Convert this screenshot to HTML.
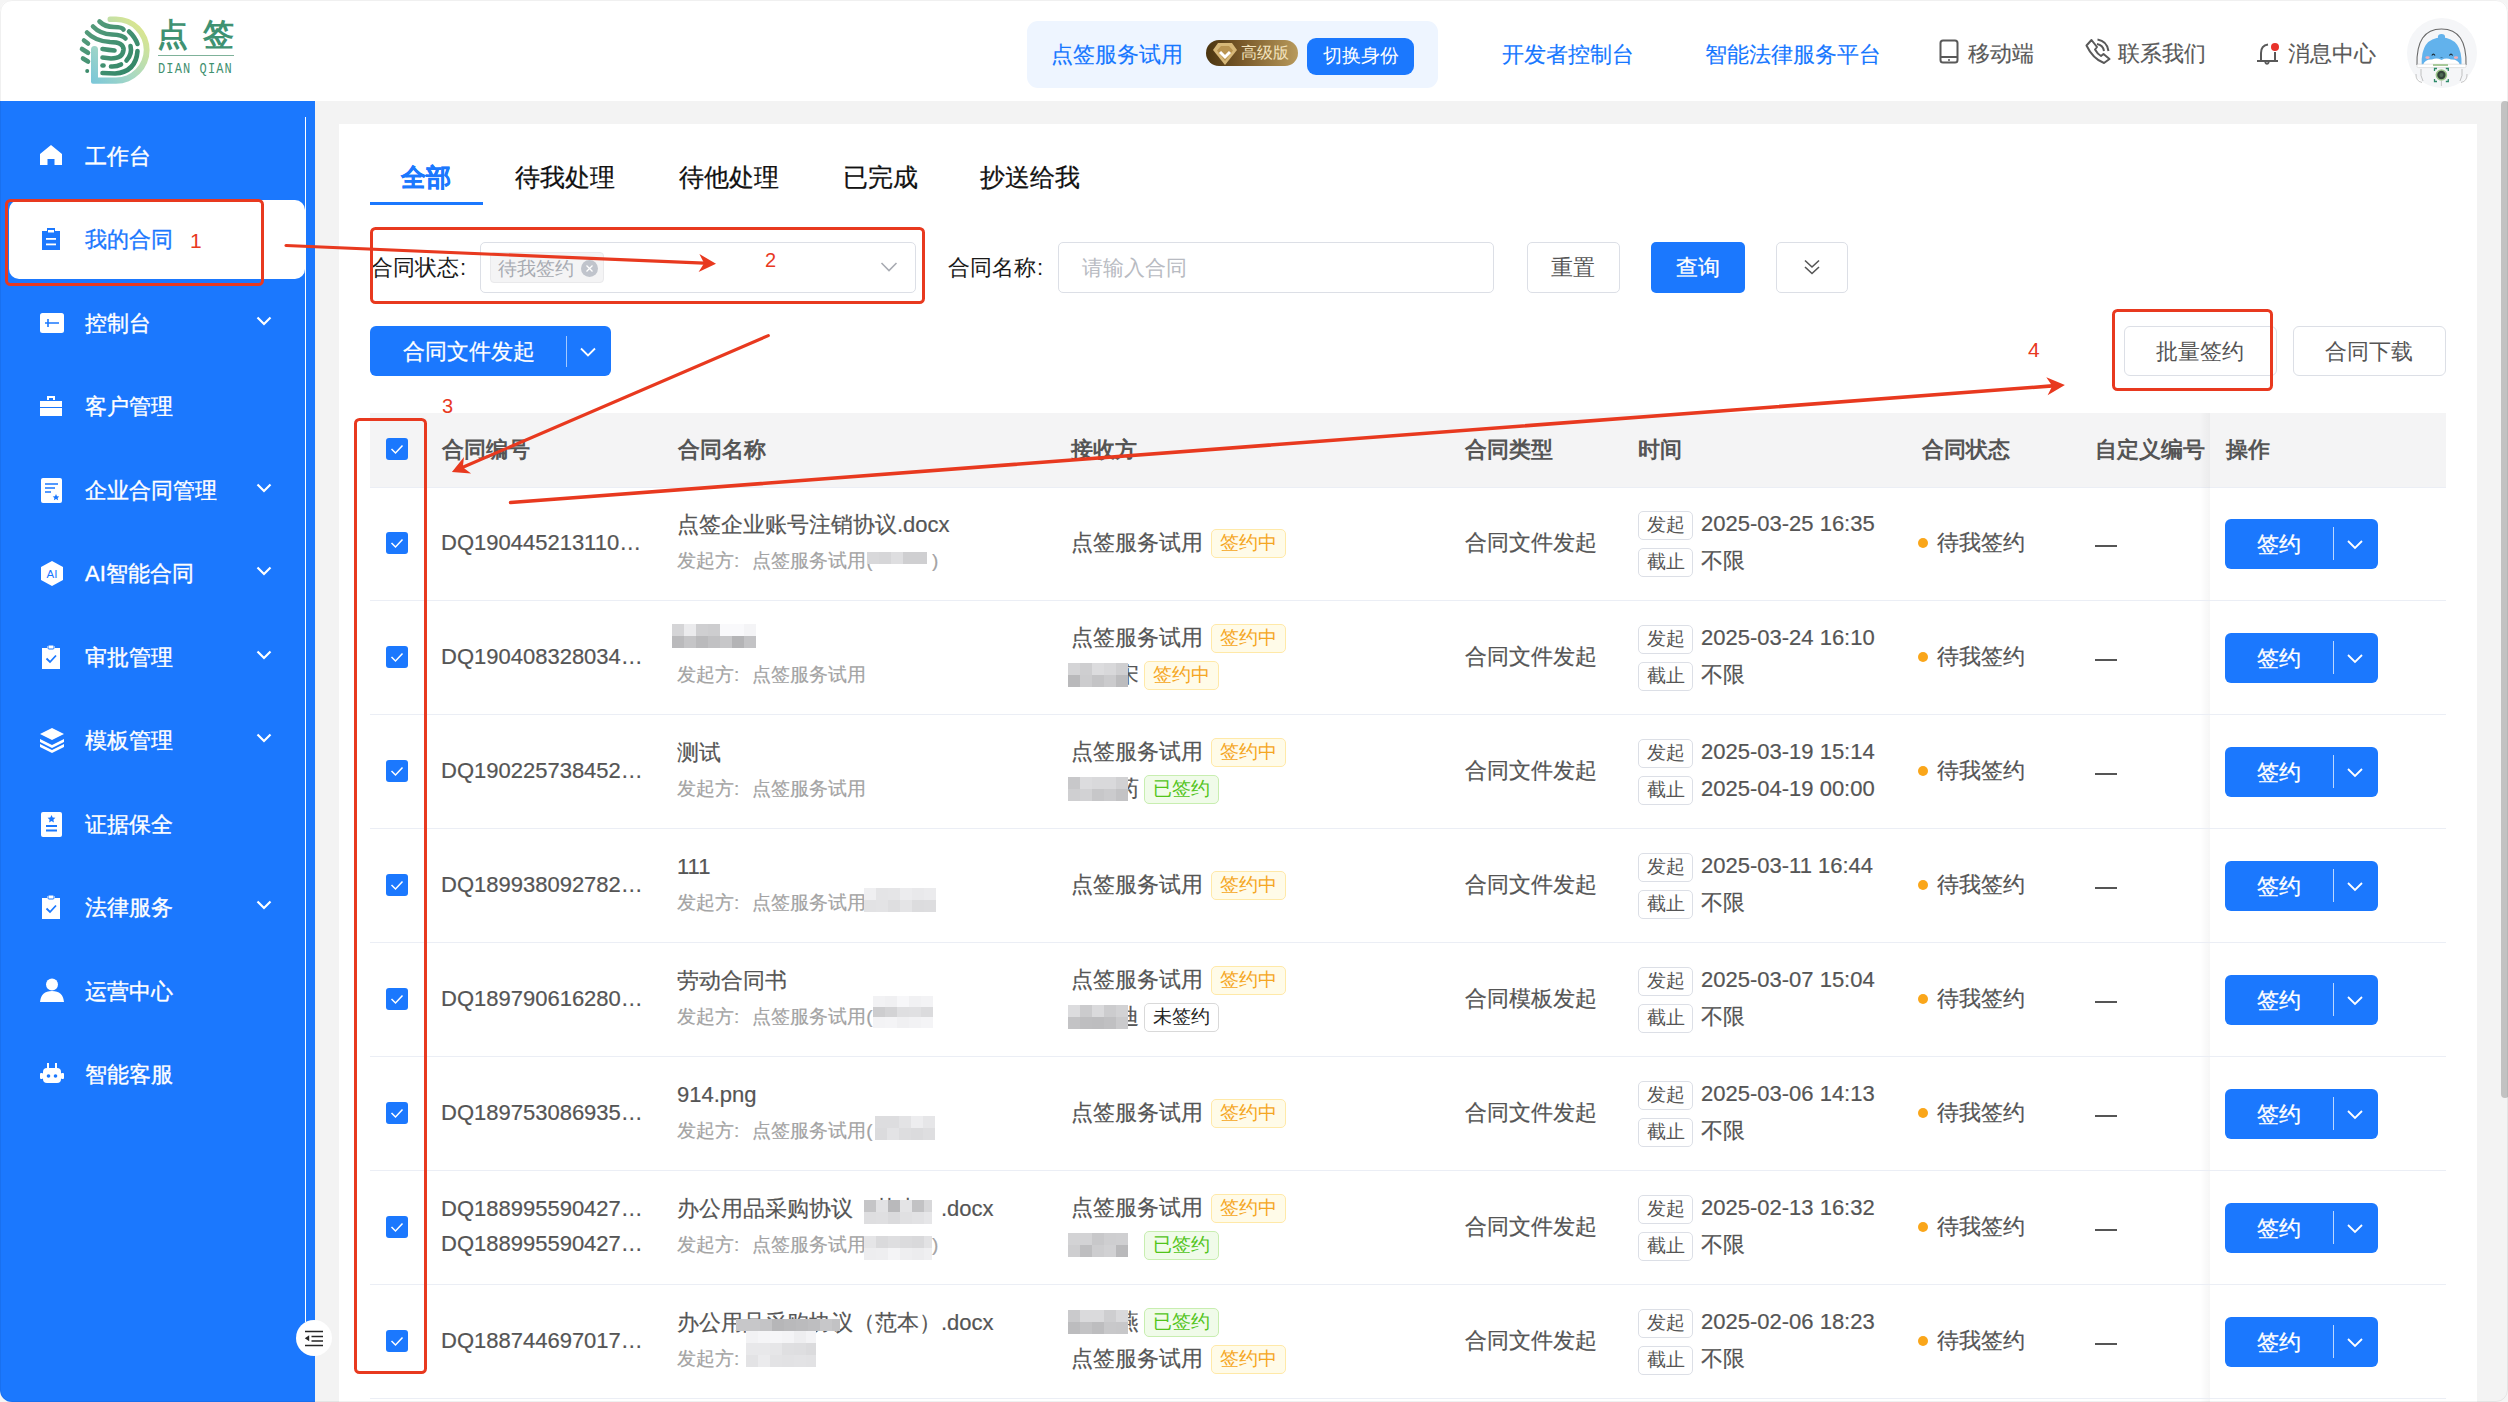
<!DOCTYPE html>
<html><head><meta charset="utf-8">
<style>
*{box-sizing:border-box;margin:0;padding:0}
html,body{width:2508px;height:1402px;overflow:hidden;background:#f5f5f5}
body{position:relative;font-family:"Liberation Sans",sans-serif;color:#555}
.a{position:absolute}
.nw{white-space:nowrap}
#hdr{left:0;top:0;width:2508px;height:101px;background:#fff}
#side{left:0;top:101px;width:315px;height:1301px;background:#1b78fe}
#card{left:339px;top:124px;width:2138px;height:1290px;background:#fff}
.hl{font-size:22px;line-height:22px;color:#1677ff;-webkit-text-stroke:0.15px currentColor}
.hg{font-size:22px;line-height:22px;color:#595959;-webkit-text-stroke:0.15px currentColor}
.mi{left:85px;font-size:22px;line-height:22px;color:#fff;font-weight:400;margin-top:1px;-webkit-text-stroke:0.35px currentColor}
.ts{-webkit-text-stroke:0.2px currentColor}
.ic{left:40px}
.chev{left:257px}
</style></head><body>
<div id="win" class="a" style="left:0;top:0;width:2508px;height:1402px;border-radius:12px;overflow:hidden;background:#f3f3f3">
<!-- HEADER -->
<div id="hdr" class="a">
  <!-- logo -->
  <svg class="a" style="left:60px;top:0px" width="200" height="100" viewBox="0 0 200 100">
    <defs><linearGradient id="lg" x1="31" y1="84" x2="90" y2="30" gradientUnits="userSpaceOnUse"><stop offset="0" stop-color="#78c6da"/><stop offset="0.45" stop-color="#a9d9c2"/><stop offset="1" stop-color="#dfe78a"/></linearGradient>
    <linearGradient id="lg2" x1="20" y1="20" x2="80" y2="75" gradientUnits="userSpaceOnUse"><stop offset="0" stop-color="#5a9e7e"/><stop offset="1" stop-color="#2f8566"/></linearGradient></defs>
    <path d="M31 49.5 Q31 46 34.5 46 Q38 46 38 49.5 L38 77.5 L56 77.5 A27.5 27.5 0 0 0 56 22 L50 22 Q47.5 22 47.5 19.2 Q47.5 16.5 50 16.5 L56 16.5 A33.5 33.5 0 0 1 56 83.7 L33 83.7 Q31 83.7 31 81.7 Z" fill="url(#lg)"/>
    <g fill="none" stroke="url(#lg2)" stroke-width="4.6" stroke-linecap="round">
      <path d="M39.5 21.5 Q45 27 54 27 Q62 27 63.5 29.5"/>
      <path d="M33 26.5 Q40 34 52 34.5 Q63 35 65.5 38.5"/>
      <path d="M27 32.5 Q35 41 50 42 Q64 42 63.5 50 Q62.5 58.5 51 58.5 L42.5 57.5"/>
      <path d="M42.5 49 Q49 50 54.5 50.5"/>
      <path d="M69 31.5 Q75 37 77.5 44"/>
      <path d="M70.5 46 Q72.5 54 66.5 60.5"/>
      <path d="M77.5 51 Q76 72 55 73.5 L42.5 73"/>
      <path d="M42.5 65.5 L43.5 65.5"/>
      <path d="M51 66.5 Q57 66.8 61 64.5"/>
      <path d="M24 40.5 L28 43.5"/>
      <path d="M22 49 L28 52.8"/>
      <path d="M23 58.5 L28 61.5"/>
    </g>
    <circle cx="27.2" cy="71" r="2" fill="#3d8c6c"/>
  </svg>
  <div class="a nw" style="left:157px;top:17px;font-size:31px;line-height:36px;font-weight:900;color:#3f9272;letter-spacing:15px">点签</div>
  <div class="a" style="left:158px;top:55px;width:76px;height:1px;background:#7fb29a"></div>
  <div class="a nw" style="left:158px;top:62px;font-size:15px;line-height:16px;color:#3f9070;letter-spacing:1.4px;font-family:'Liberation Mono',monospace;transform:scaleX(0.8);transform-origin:0 0">DIAN QIAN</div>

  <div class="a" style="left:1027px;top:21px;width:411px;height:67px;background:#eef5ff;border-radius:11px"></div>
  <div class="a nw hl" style="left:1051px;top:44px">点签服务试用</div>
  <div class="a" style="left:1206px;top:40px;width:92px;height:26px;border-radius:13px;background:linear-gradient(90deg,#4b3510 0%,#7a5a2a 40%,#b89a5c 100%)"></div>
  <svg class="a" style="left:1212px;top:42px" width="26" height="24" viewBox="0 0 26 24"><path d="M6 1 L20 1 L25 8 L13 23 L1 8Z" fill="#d7b878"/><path d="M9 4 L17 4 L21 8.5 L13 19 L5 8.5Z" fill="#b99451"/><path d="M8 10 L13 15 L18 10" fill="none" stroke="#fff" stroke-width="3"/></svg>
  <div class="a nw" style="left:1241px;top:44px;font-size:16px;line-height:18px;color:#f3e3bd">高级版</div>
  <div class="a" style="left:1307px;top:38px;width:107px;height:37px;background:#1b78fe;border-radius:9px"></div>
  <div class="a nw" style="left:1323px;top:45px;font-size:19px;line-height:22px;color:#fff">切换身份</div>

  <div class="a nw hl" style="left:1502px;top:44px">开发者控制台</div>
  <div class="a nw hl" style="left:1705px;top:44px">智能法律服务平台</div>

  <svg class="a" style="left:1939px;top:39px" width="20" height="26" viewBox="0 0 20 26"><rect x="1.5" y="1.5" width="17" height="22" rx="2.5" fill="none" stroke="#595959" stroke-width="2"/><path d="M2 18H18" stroke="#595959" stroke-width="2"/><circle cx="10" cy="21" r="1" fill="#595959"/></svg>
  <div class="a nw hg" style="left:1968px;top:43px">移动端</div>
  <svg class="a" style="left:2084px;top:37px" width="28" height="28" viewBox="0 0 28 28"><path d="M2.5 8.5 L7.5 3 L13 10 L11 12.5 Q13.5 17 17 19 L19.5 17 L25.5 22 L20 26 Q9 22 2.5 8.5Z" fill="none" stroke="#595959" stroke-width="2" stroke-linejoin="round"/><path d="M13.5 2.5 Q23 4 24.5 14" fill="none" stroke="#595959" stroke-width="2"/><path d="M13 7 Q19 8 20 14" fill="none" stroke="#595959" stroke-width="2"/></svg>
  <div class="a nw hg" style="left:2118px;top:43px">联系我们</div>
  <svg class="a" style="left:2256px;top:42px" width="26" height="24" viewBox="0 0 26 24"><path d="M5 18 L5 11 Q5 3.5 12 2.5" fill="none" stroke="#595959" stroke-width="2"/><path d="M19 10 L19 18" fill="none" stroke="#595959" stroke-width="2"/><path d="M1 19H22" stroke="#595959" stroke-width="2"/><path d="M9 20 Q11 23.5 13 20" fill="none" stroke="#595959" stroke-width="1.8"/><circle cx="19" cy="5" r="4" fill="#e8322b"/></svg>
  <div class="a nw hg" style="left:2288px;top:43px">消息中心</div>
  <!-- avatar -->
  <div class="a" style="left:2407px;top:18px;width:70px;height:70px;border-radius:50%;background:#f5f6f8"></div>
  <svg class="a" style="left:2407px;top:18px" width="70" height="70" viewBox="0 0 70 70">
    <path d="M10 47 Q9 11 34.5 11 Q60 11 59 47" fill="none" stroke="#6a6a6a" stroke-width="1.1"/>
    <path d="M14.7 47 Q13.5 20 34.5 19.5 Q55.5 20 54.5 47Z" fill="#62b2ec"/>
    <ellipse cx="34.5" cy="19" rx="3.6" ry="3" fill="#62b2ec"/>
    <path d="M16 47 Q18 41 25 41.5 Q30 39.5 34.5 42 Q39 39.5 44 41.5 Q51 41 53 47Z" fill="#fff"/>
    <path d="M24.8 37.5 Q26.4 34.8 28 37.5 M42.4 37.5 Q44 34.8 45.6 37.5" fill="none" stroke="#1d2a33" stroke-width="1.1"/>
    <path d="M33.5 39.5h2" stroke="#2b5a7a" stroke-width="0.6"/>
    <ellipse cx="20.5" cy="39.6" rx="2.2" ry="1.3" fill="#f4aeb6"/><ellipse cx="49" cy="39.6" rx="2.2" ry="1.3" fill="#f4aeb6"/>
    <rect x="10" y="46.2" width="49" height="3.4" rx="1.2" fill="#fff" stroke="#c9c9c9" stroke-width="0.5"/>
    <rect x="26" y="46" width="15" height="2" fill="#a8c99a"/>
    <path d="M9 56 Q8.5 63 15 64.5 M60 56 Q60.5 63 54 64.5 M14 51 Q13 58 16 63 M55 51 Q56 58 53 63" fill="none" stroke="#aaa" stroke-width="0.7"/>
    <circle cx="34.4" cy="57" r="5.8" fill="#9cc58a"/><circle cx="34.4" cy="57" r="4.2" fill="#34433a"/><circle cx="34.4" cy="57" r="2" fill="#4f6a55"/>
    <path d="M27.5 53v-2.5h2.5 M41.3 53v-2.5h-2.5 M27.5 61v2.5h2.5 M41.3 61v2.5h-2.5" fill="none" stroke="#2e8a6a" stroke-width="1.3"/>
    <path d="M34.4 63v5" stroke="#bbb" stroke-width="0.8"/>
  </svg>
  
</div>

<!-- SIDEBAR -->
<div id="side" class="a">
</div>
<div class="a" style="left:305px;top:117px;width:1px;height:1205px;background:#fff"></div>
<div class="a" style="left:9px;top:200px;width:296px;height:79px;background:#fff;border-radius:10px"></div>
<svg class="a" style="left:40px;top:144px" width="24" height="25" viewBox="0 0 24 25"><path d="M11 1 L22 10 L22 21 L14.5 21 L14.5 15 L7.5 15 L7.5 21 L0 21 L0 10Z" fill="#fff"/></svg>
<div class="a nw mi" style="top:145px;color:#fff">工作台</div>
<svg class="a" style="left:40px;top:227px" width="24" height="25" viewBox="0 0 24 25"><path d="M7 1h8v3h5v19H2V4h5Z" fill="#1b78fe"/><rect x="6" y="11" width="10" height="1.8" fill="#fff"/><rect x="6" y="16.5" width="10" height="1.8" fill="#fff"/><rect x="8" y="3" width="6" height="2.5" fill="#fff"/></svg>
<div class="a nw mi" style="top:228px;color:#1b78fe">我的合同</div>
<svg class="a" style="left:40px;top:311px" width="24" height="25" viewBox="0 0 24 25"><rect x="0" y="2" width="24" height="20" rx="2.5" fill="#fff"/><path d="M5 12H19 M8 8V16" stroke="#1b78fe" stroke-width="1.6"/></svg>
<div class="a nw mi" style="top:312px;color:#fff">控制台</div>
<svg class="a" style="left:256px;top:316px" width="16" height="10" viewBox="0 0 16 10"><path d="M1.5 1.5L8 8l6.5-6.5" fill="none" stroke="#fff" stroke-width="2.2"/></svg>
<svg class="a" style="left:40px;top:394px" width="24" height="25" viewBox="0 0 24 25"><path d="M7 2h8v4h-2V4H9v2H7Z M0 7h22v6H0Z M0 14h22v8H0Z" fill="#fff"/></svg>
<div class="a nw mi" style="top:395px;color:#fff">客户管理</div>
<svg class="a" style="left:40px;top:478px" width="24" height="25" viewBox="0 0 24 25"><rect x="1" y="0" width="21" height="25" rx="2" fill="#fff"/><path d="M5 6h13 M5 10h10 M5 14h6" stroke="#1b78fe" stroke-width="1.6"/><path d="M16 16l1 2.2 2.3.3-1.7 1.5.5 2.3-2.1-1.2-2.1 1.2.5-2.3-1.7-1.5 2.3-.3Z" fill="#1b78fe"/></svg>
<div class="a nw mi" style="top:479px;color:#fff">企业合同管理</div>
<svg class="a" style="left:256px;top:483px" width="16" height="10" viewBox="0 0 16 10"><path d="M1.5 1.5L8 8l6.5-6.5" fill="none" stroke="#fff" stroke-width="2.2"/></svg>
<svg class="a" style="left:40px;top:561px" width="24" height="25" viewBox="0 0 24 25"><path d="M12 0 L23 6 L23 19 L12 25 L1 19 L1 6Z" fill="#fff"/><text x="12" y="17" font-size="11.5" text-anchor="middle" fill="#1b78fe" font-family="Liberation Sans">AI</text></svg>
<div class="a nw mi" style="top:562px;color:#fff">AI智能合同</div>
<svg class="a" style="left:256px;top:566px" width="16" height="10" viewBox="0 0 16 10"><path d="M1.5 1.5L8 8l6.5-6.5" fill="none" stroke="#fff" stroke-width="2.2"/></svg>
<svg class="a" style="left:40px;top:645px" width="24" height="25" viewBox="0 0 24 25"><path d="M7 1h8v2h5v21H2V3h5Z" fill="#fff"/><rect x="8" y="0" width="6" height="4" rx="1" fill="#fff" stroke="#1b78fe" stroke-width="1"/><path d="M6.5 13.5l3.5 3.5 6-6.5" fill="none" stroke="#1b78fe" stroke-width="1.8"/></svg>
<div class="a nw mi" style="top:646px;color:#fff">审批管理</div>
<svg class="a" style="left:256px;top:650px" width="16" height="10" viewBox="0 0 16 10"><path d="M1.5 1.5L8 8l6.5-6.5" fill="none" stroke="#fff" stroke-width="2.2"/></svg>
<svg class="a" style="left:40px;top:728px" width="24" height="25" viewBox="0 0 24 25"><path d="M12 0L24 6L12 12L0 6Z" fill="#fff"/><path d="M0 11l12 6 12-6v3l-12 6-12-6Z" fill="#fff"/><path d="M0 16l12 6 12-6v3l-12 6-12-6Z" fill="#fff"/></svg>
<div class="a nw mi" style="top:729px;color:#fff">模板管理</div>
<svg class="a" style="left:256px;top:733px" width="16" height="10" viewBox="0 0 16 10"><path d="M1.5 1.5L8 8l6.5-6.5" fill="none" stroke="#fff" stroke-width="2.2"/></svg>
<svg class="a" style="left:40px;top:812px" width="24" height="25" viewBox="0 0 24 25"><rect x="1" y="0" width="21" height="25" rx="2" fill="#fff"/><path d="M11.5 3l1.2 2.5 2.7.3-2 1.9.5 2.7-2.4-1.3-2.4 1.3.5-2.7-2-1.9 2.7-.3Z" fill="#1b78fe"/><path d="M6 14h11 M6 18.5h11" stroke="#1b78fe" stroke-width="1.8"/></svg>
<div class="a nw mi" style="top:813px;color:#fff">证据保全</div>
<svg class="a" style="left:40px;top:895px" width="24" height="25" viewBox="0 0 24 25"><path d="M7 1h8v2h5v21H2V3h5Z" fill="#fff"/><rect x="8" y="0" width="6" height="4" rx="1" fill="#fff" stroke="#1b78fe" stroke-width="1"/><path d="M6.5 13.5l3.5 3.5 6-6.5" fill="none" stroke="#1b78fe" stroke-width="1.8"/></svg>
<div class="a nw mi" style="top:896px;color:#fff">法律服务</div>
<svg class="a" style="left:256px;top:900px" width="16" height="10" viewBox="0 0 16 10"><path d="M1.5 1.5L8 8l6.5-6.5" fill="none" stroke="#fff" stroke-width="2.2"/></svg>
<svg class="a" style="left:40px;top:978px" width="24" height="25" viewBox="0 0 24 25"><circle cx="12" cy="6.5" r="6" fill="#fff"/><path d="M0 24Q1 13 12 13Q23 13 24 24Z" fill="#fff"/></svg>
<div class="a nw mi" style="top:980px;color:#fff">运营中心</div>
<svg class="a" style="left:40px;top:1062px" width="24" height="25" viewBox="0 0 24 25"><rect x="3" y="6" width="18" height="15" rx="4" fill="#fff"/><rect x="0" y="11" width="3" height="6" rx="1" fill="#fff"/><rect x="21" y="11" width="3" height="6" rx="1" fill="#fff"/><path d="M8 1v5 M16 1v5" stroke="#fff" stroke-width="2"/><circle cx="8.5" cy="14" r="1.8" fill="#1b78fe"/><circle cx="15.5" cy="14" r="1.8" fill="#1b78fe"/></svg>
<div class="a nw mi" style="top:1063px;color:#fff">智能客服</div>
<div class="a" style="left:296px;top:1320px;width:36px;height:36px;border-radius:50%;background:#fff"></div>
<svg class="a" style="left:304px;top:1329px" width="20" height="18" viewBox="0 0 20 18"><path d="M1 2.5H19 M7.5 7.5H19 M7.5 12H19 M1 16.5H19" stroke="#262626" stroke-width="1.5"/><path d="M5.2 6.3V12.2L0.8 9.2Z" fill="#262626"/></svg>


<!-- SCROLLBAR -->
<div class="a" style="left:2501px;top:101px;width:8px;height:997px;background:#c2c2c2;border-radius:4px"></div>



</div>

<!-- CARD -->
<div id="card" class="a"></div>
<div class="a nw" style="left:401px;top:163px;font-size:25px;line-height:28px;color:#1b78fe;font-weight:700;-webkit-text-stroke:0.4px #1b78fe">全部</div>
<div class="a nw" style="left:515px;top:163px;font-size:25px;line-height:28px;color:#111;-webkit-text-stroke:0.25px #111">待我处理</div>
<div class="a nw" style="left:679px;top:163px;font-size:25px;line-height:28px;color:#111;-webkit-text-stroke:0.25px #111">待他处理</div>
<div class="a nw" style="left:843px;top:163px;font-size:25px;line-height:28px;color:#111;-webkit-text-stroke:0.25px #111">已完成</div>
<div class="a nw" style="left:980px;top:163px;font-size:25px;line-height:28px;color:#111;-webkit-text-stroke:0.25px #111">抄送给我</div>
<div class="a" style="left:370px;top:202px;width:113px;height:3px;background:#1b78fe"></div>
<div class="a nw" style="left:371px;top:256px;font-size:22px;line-height:24px;color:#1a1a1a">合同状态<span style="margin-left:1px">:</span></div>
<div class="a" style="left:480px;top:242px;width:436px;height:51px;border:1px solid #dcdfe6;border-radius:5px;background:#fff"></div>
<div class="a" style="left:490px;top:252px;width:114px;height:31px;border:1px solid #e9e9eb;border-radius:4px;background:#f4f4f5"></div>
<div class="a nw" style="left:498px;top:258px;font-size:18.5px;line-height:22px;color:#a8abb2">待我签约</div>
<div class="a" style="left:581px;top:260px;width:17px;height:17px;border-radius:50%;background:#c0c4cc"></div>
<svg class="a" style="left:581px;top:260px" width="17" height="17" viewBox="0 0 17 17"><path d="M5.5 5.5l6 6M11.5 5.5l-6 6" stroke="#fff" stroke-width="1.3"/></svg>
<svg class="a" style="left:880px;top:261px" width="18" height="12" viewBox="0 0 18 12"><path d="M1.5 2L9 9.5 16.5 2" fill="none" stroke="#a8abb2" stroke-width="1.6"/></svg>
<div class="a nw" style="left:948px;top:256px;font-size:22px;line-height:24px;color:#1a1a1a">合同名称<span style="margin-left:1px">:</span></div>
<div class="a" style="left:1058px;top:242px;width:436px;height:51px;border:1px solid #dcdfe6;border-radius:5px;background:#fff"></div>
<div class="a nw" style="left:1082px;top:256px;font-size:21px;line-height:24px;color:#b8bbc2">请输入合同</div>
<div class="a" style="left:1527px;top:242px;width:93px;height:51px;border:1px solid #dcdfe6;border-radius:5px;background:#fff"></div>
<div class="a nw" style="left:1551px;top:256px;font-size:22px;line-height:24px;color:#555">重置</div>
<div class="a" style="left:1651px;top:242px;width:94px;height:51px;border-radius:5px;background:#1b78fe"></div>
<div class="a nw" style="left:1676px;top:256px;font-size:22px;line-height:24px;color:#fff;-webkit-text-stroke:0.3px #fff">查询</div>
<div class="a" style="left:1776px;top:242px;width:72px;height:51px;border:1px solid #dcdfe6;border-radius:5px;background:#fff"></div>
<svg class="a" style="left:1801px;top:258px" width="22" height="18" viewBox="0 0 22 18"><path d="M4 2.5l7 6.5 7-6.5M4 9l7 6.5 7-6.5" fill="none" stroke="#555" stroke-width="1.6"/></svg>
<div class="a" style="left:370px;top:326px;width:241px;height:50px;border-radius:6px;background:#1b78fe"></div>
<div class="a nw" style="left:403px;top:340px;font-size:22px;line-height:24px;color:#fff;-webkit-text-stroke:0.25px #fff">合同文件发起</div>
<div class="a" style="left:566px;top:336px;width:1px;height:31px;background:rgba(255,255,255,.6)"></div>
<svg class="a" style="left:579px;top:346px" width="18" height="12" viewBox="0 0 18 12"><path d="M2 2.5L9 9.5 16 2.5" fill="none" stroke="#fff" stroke-width="1.8"/></svg>
<div class="a" style="left:2124px;top:326px;width:153px;height:50px;border:1px solid #dcdfe6;border-radius:6px;background:#fff"></div>
<div class="a nw" style="left:2156px;top:340px;font-size:22px;line-height:24px;color:#555">批量签约</div>
<div class="a" style="left:2293px;top:326px;width:153px;height:50px;border:1px solid #dcdfe6;border-radius:6px;background:#fff"></div>
<div class="a nw" style="left:2325px;top:340px;font-size:22px;line-height:24px;color:#555">合同下载</div>
<div class="a" style="left:370px;top:413px;width:2076px;height:75px;background:#f4f4f5;border-bottom:1px solid #ebeef5"></div>
<div class="a" style="left:386px;top:438px;width:22px;height:22px;border-radius:3px;background:#1b78fe"></div><svg class="a" style="left:386px;top:438px" width="22" height="22" viewBox="0 0 22 22"><path d="M5.5 11l4 4 7-7.5" fill="none" stroke="#fff" stroke-width="1.5"/></svg>
<div class="a nw" style="left:442px;top:438px;font-size:22px;line-height:24px;color:#555;font-weight:700">合同编号</div>
<div class="a nw" style="left:678px;top:438px;font-size:22px;line-height:24px;color:#555;font-weight:700">合同名称</div>
<div class="a nw" style="left:1071px;top:438px;font-size:22px;line-height:24px;color:#555;font-weight:700">接收方</div>
<div class="a nw" style="left:1465px;top:438px;font-size:22px;line-height:24px;color:#555;font-weight:700">合同类型</div>
<div class="a nw" style="left:1638px;top:438px;font-size:22px;line-height:24px;color:#555;font-weight:700">时间</div>
<div class="a nw" style="left:1922px;top:438px;font-size:22px;line-height:24px;color:#555;font-weight:700">合同状态</div>
<div class="a nw" style="left:2095px;top:438px;font-size:22px;line-height:24px;color:#555;font-weight:700">自定义编号</div>
<div class="a nw" style="left:2226px;top:438px;font-size:22px;line-height:24px;color:#555;font-weight:700">操作</div>
<div class="a" style="left:2200px;top:413px;width:10px;height:989px;background:linear-gradient(90deg,rgba(0,0,0,0),rgba(0,0,0,.035))"></div>
<div class="a" style="left:370px;top:600px;width:2076px;height:1px;background:#ebeef5"></div>
<div class="a" style="left:386px;top:532px;width:22px;height:22px;border-radius:3px;background:#1b78fe"></div><svg class="a" style="left:386px;top:532px" width="22" height="22" viewBox="0 0 22 22"><path d="M5.5 11l4 4 7-7.5" fill="none" stroke="#fff" stroke-width="1.5"/></svg>
<div class="a nw ts" style="left:441px;top:531px;font-size:22px;line-height:24px;color:#555;">DQ190445213110…</div>
<div class="a nw ts" style="left:677px;top:513px;font-size:22px;line-height:24px;color:#555;">点签企业账号注销协议.docx</div>
<div class="a nw ts" style="left:677px;top:549px;font-size:19px;line-height:24px;color:#a3a3a3;">发起方<span style='margin-right:13px'>:</span>点签服务试用(</div>
<div class="a" style="left:867px;top:552px;width:12px;height:12px;background:rgb(216,216,218)"></div><div class="a" style="left:879px;top:552px;width:12px;height:12px;background:rgb(214,214,216)"></div><div class="a" style="left:891px;top:552px;width:12px;height:12px;background:rgb(222,222,224)"></div><div class="a" style="left:903px;top:552px;width:12px;height:12px;background:rgb(207,207,209)"></div><div class="a" style="left:915px;top:552px;width:12px;height:12px;background:rgb(207,207,209)"></div>
<div class="a nw ts" style="left:1071px;top:531px;font-size:22px;line-height:24px;color:#555;">点签服务试用</div>
<div class="a" style="left:1211px;top:529px;width:75px;height:29px;border:1px solid #ffe9a8;border-radius:5px;background:#fffbe8"></div><div class="a nw" style="left:1220px;top:532px;font-size:19px;line-height:22px;color:#f5a623">签约中</div>
<div class="a nw ts" style="left:932px;top:549px;font-size:19px;line-height:24px;color:#a3a3a3;">)</div>
<div class="a nw ts" style="left:1465px;top:531px;font-size:22px;line-height:24px;color:#555;">合同文件发起</div>
<div class="a" style="left:1638px;top:511px;width:55px;height:29px;border:1px solid #dcdfe6;border-radius:5px;background:#fff"></div><div class="a nw" style="left:1647px;top:514px;font-size:19px;line-height:22px;color:#555">发起</div>
<div class="a nw ts" style="left:1701px;top:512px;font-size:22px;line-height:24px;color:#555;">2025-03-25 16:35</div>
<div class="a" style="left:1638px;top:548px;width:55px;height:29px;border:1px solid #dcdfe6;border-radius:5px;background:#fff"></div><div class="a nw" style="left:1647px;top:551px;font-size:19px;line-height:22px;color:#555">截止</div>
<div class="a nw ts" style="left:1701px;top:549px;font-size:22px;line-height:24px;color:#555;">不限</div>
<div class="a" style="left:1918px;top:538px;width:10px;height:10px;border-radius:50%;background:#faa61a"></div>
<div class="a nw ts" style="left:1937px;top:531px;font-size:22px;line-height:24px;color:#555;">待我签约</div>
<div class="a" style="left:2095px;top:545px;width:22px;height:1.5px;background:#555"></div>
<div class="a" style="left:2225px;top:519px;width:153px;height:50px;border-radius:6px;background:#1b78fe"></div>
<div class="a nw" style="left:2257px;top:533px;font-size:22px;line-height:24px;color:#fff;-webkit-text-stroke:0.3px #fff">签约</div>
<div class="a" style="left:2333px;top:527px;width:1px;height:33px;background:rgba(255,255,255,.7)"></div>
<svg class="a" style="left:2346px;top:539px" width="18" height="12" viewBox="0 0 18 12"><path d="M2 2L9 9 16 2" fill="none" stroke="#fff" stroke-width="1.8"/></svg>
<div class="a" style="left:370px;top:714px;width:2076px;height:1px;background:#ebeef5"></div>
<div class="a" style="left:386px;top:646px;width:22px;height:22px;border-radius:3px;background:#1b78fe"></div><svg class="a" style="left:386px;top:646px" width="22" height="22" viewBox="0 0 22 22"><path d="M5.5 11l4 4 7-7.5" fill="none" stroke="#fff" stroke-width="1.5"/></svg>
<div class="a nw ts" style="left:441px;top:645px;font-size:22px;line-height:24px;color:#555;">DQ190408328034…</div>
<div class="a" style="left:672px;top:624px;width:12px;height:12px;background:rgb(213,213,215)"></div><div class="a" style="left:684px;top:624px;width:12px;height:12px;background:rgb(235,235,237)"></div><div class="a" style="left:696px;top:624px;width:12px;height:12px;background:rgb(207,207,209)"></div><div class="a" style="left:708px;top:624px;width:12px;height:12px;background:rgb(205,205,207)"></div><div class="a" style="left:720px;top:624px;width:12px;height:12px;background:rgb(249,249,251)"></div><div class="a" style="left:732px;top:624px;width:12px;height:12px;background:rgb(249,249,251)"></div><div class="a" style="left:744px;top:624px;width:12px;height:12px;background:rgb(244,244,246)"></div><div class="a" style="left:672px;top:636px;width:12px;height:12px;background:rgb(186,186,188)"></div><div class="a" style="left:684px;top:636px;width:12px;height:12px;background:rgb(197,197,199)"></div><div class="a" style="left:696px;top:636px;width:12px;height:12px;background:rgb(186,186,188)"></div><div class="a" style="left:708px;top:636px;width:12px;height:12px;background:rgb(193,193,195)"></div><div class="a" style="left:720px;top:636px;width:12px;height:12px;background:rgb(199,199,201)"></div><div class="a" style="left:732px;top:636px;width:12px;height:12px;background:rgb(180,180,182)"></div><div class="a" style="left:744px;top:636px;width:12px;height:12px;background:rgb(195,195,197)"></div>
<div class="a nw ts" style="left:677px;top:663px;font-size:19px;line-height:24px;color:#a3a3a3;">发起方<span style='margin-right:13px'>:</span>点签服务试用</div>
<div class="a nw ts" style="left:1071px;top:626px;font-size:22px;line-height:24px;color:#555;">点签服务试用</div>
<div class="a" style="left:1211px;top:624px;width:75px;height:29px;border:1px solid #ffe9a8;border-radius:5px;background:#fffbe8"></div><div class="a nw" style="left:1220px;top:627px;font-size:19px;line-height:22px;color:#f5a623">签约中</div>
<div class="a nw ts" style="left:1117px;top:663px;font-size:22px;line-height:24px;color:#555;">宋</div>
<div class="a" style="left:1068px;top:663px;width:12px;height:12px;background:rgb(212,212,214)"></div><div class="a" style="left:1080px;top:663px;width:12px;height:12px;background:rgb(206,206,208)"></div><div class="a" style="left:1092px;top:663px;width:12px;height:12px;background:rgb(220,220,222)"></div><div class="a" style="left:1104px;top:663px;width:12px;height:12px;background:rgb(216,216,218)"></div><div class="a" style="left:1116px;top:663px;width:12px;height:12px;background:rgb(207,207,209)"></div><div class="a" style="left:1068px;top:675px;width:12px;height:12px;background:rgb(185,185,187)"></div><div class="a" style="left:1080px;top:675px;width:12px;height:12px;background:rgb(204,204,206)"></div><div class="a" style="left:1092px;top:675px;width:12px;height:12px;background:rgb(196,196,198)"></div><div class="a" style="left:1104px;top:675px;width:12px;height:12px;background:rgb(203,203,205)"></div><div class="a" style="left:1116px;top:675px;width:12px;height:12px;background:rgb(188,188,190)"></div>
<div class="a" style="left:1144px;top:661px;width:75px;height:29px;border:1px solid #ffe9a8;border-radius:5px;background:#fffbe8"></div><div class="a nw" style="left:1153px;top:664px;font-size:19px;line-height:22px;color:#f5a623">签约中</div>
<div class="a nw ts" style="left:1465px;top:645px;font-size:22px;line-height:24px;color:#555;">合同文件发起</div>
<div class="a" style="left:1638px;top:625px;width:55px;height:29px;border:1px solid #dcdfe6;border-radius:5px;background:#fff"></div><div class="a nw" style="left:1647px;top:628px;font-size:19px;line-height:22px;color:#555">发起</div>
<div class="a nw ts" style="left:1701px;top:626px;font-size:22px;line-height:24px;color:#555;">2025-03-24 16:10</div>
<div class="a" style="left:1638px;top:662px;width:55px;height:29px;border:1px solid #dcdfe6;border-radius:5px;background:#fff"></div><div class="a nw" style="left:1647px;top:665px;font-size:19px;line-height:22px;color:#555">截止</div>
<div class="a nw ts" style="left:1701px;top:663px;font-size:22px;line-height:24px;color:#555;">不限</div>
<div class="a" style="left:1918px;top:652px;width:10px;height:10px;border-radius:50%;background:#faa61a"></div>
<div class="a nw ts" style="left:1937px;top:645px;font-size:22px;line-height:24px;color:#555;">待我签约</div>
<div class="a" style="left:2095px;top:659px;width:22px;height:1.5px;background:#555"></div>
<div class="a" style="left:2225px;top:633px;width:153px;height:50px;border-radius:6px;background:#1b78fe"></div>
<div class="a nw" style="left:2257px;top:647px;font-size:22px;line-height:24px;color:#fff;-webkit-text-stroke:0.3px #fff">签约</div>
<div class="a" style="left:2333px;top:641px;width:1px;height:33px;background:rgba(255,255,255,.7)"></div>
<svg class="a" style="left:2346px;top:653px" width="18" height="12" viewBox="0 0 18 12"><path d="M2 2L9 9 16 2" fill="none" stroke="#fff" stroke-width="1.8"/></svg>
<div class="a" style="left:370px;top:828px;width:2076px;height:1px;background:#ebeef5"></div>
<div class="a" style="left:386px;top:760px;width:22px;height:22px;border-radius:3px;background:#1b78fe"></div><svg class="a" style="left:386px;top:760px" width="22" height="22" viewBox="0 0 22 22"><path d="M5.5 11l4 4 7-7.5" fill="none" stroke="#fff" stroke-width="1.5"/></svg>
<div class="a nw ts" style="left:441px;top:759px;font-size:22px;line-height:24px;color:#555;">DQ190225738452…</div>
<div class="a nw ts" style="left:677px;top:741px;font-size:22px;line-height:24px;color:#555;">测试</div>
<div class="a nw ts" style="left:677px;top:777px;font-size:19px;line-height:24px;color:#a3a3a3;">发起方<span style='margin-right:13px'>:</span>点签服务试用</div>
<div class="a nw ts" style="left:1071px;top:740px;font-size:22px;line-height:24px;color:#555;">点签服务试用</div>
<div class="a" style="left:1211px;top:738px;width:75px;height:29px;border:1px solid #ffe9a8;border-radius:5px;background:#fffbe8"></div><div class="a nw" style="left:1220px;top:741px;font-size:19px;line-height:22px;color:#f5a623">签约中</div>
<div class="a nw ts" style="left:1117px;top:777px;font-size:22px;line-height:24px;color:#555;">药</div>
<div class="a" style="left:1068px;top:777px;width:12px;height:12px;background:rgb(200,200,202)"></div><div class="a" style="left:1080px;top:777px;width:12px;height:12px;background:rgb(220,220,222)"></div><div class="a" style="left:1092px;top:777px;width:12px;height:12px;background:rgb(217,217,219)"></div><div class="a" style="left:1104px;top:777px;width:12px;height:12px;background:rgb(217,217,219)"></div><div class="a" style="left:1116px;top:777px;width:12px;height:12px;background:rgb(209,209,211)"></div><div class="a" style="left:1068px;top:789px;width:12px;height:12px;background:rgb(207,207,209)"></div><div class="a" style="left:1080px;top:789px;width:12px;height:12px;background:rgb(210,210,212)"></div><div class="a" style="left:1092px;top:789px;width:12px;height:12px;background:rgb(199,199,201)"></div><div class="a" style="left:1104px;top:789px;width:12px;height:12px;background:rgb(203,203,205)"></div><div class="a" style="left:1116px;top:789px;width:12px;height:12px;background:rgb(195,195,197)"></div>
<div class="a" style="left:1144px;top:775px;width:75px;height:29px;border:1px solid #c8eeb0;border-radius:5px;background:#f0fbe9"></div><div class="a nw" style="left:1153px;top:778px;font-size:19px;line-height:22px;color:#52c41a">已签约</div>
<div class="a nw ts" style="left:1465px;top:759px;font-size:22px;line-height:24px;color:#555;">合同文件发起</div>
<div class="a" style="left:1638px;top:739px;width:55px;height:29px;border:1px solid #dcdfe6;border-radius:5px;background:#fff"></div><div class="a nw" style="left:1647px;top:742px;font-size:19px;line-height:22px;color:#555">发起</div>
<div class="a nw ts" style="left:1701px;top:740px;font-size:22px;line-height:24px;color:#555;">2025-03-19 15:14</div>
<div class="a" style="left:1638px;top:776px;width:55px;height:29px;border:1px solid #dcdfe6;border-radius:5px;background:#fff"></div><div class="a nw" style="left:1647px;top:779px;font-size:19px;line-height:22px;color:#555">截止</div>
<div class="a nw ts" style="left:1701px;top:777px;font-size:22px;line-height:24px;color:#555;">2025-04-19 00:00</div>
<div class="a" style="left:1918px;top:766px;width:10px;height:10px;border-radius:50%;background:#faa61a"></div>
<div class="a nw ts" style="left:1937px;top:759px;font-size:22px;line-height:24px;color:#555;">待我签约</div>
<div class="a" style="left:2095px;top:773px;width:22px;height:1.5px;background:#555"></div>
<div class="a" style="left:2225px;top:747px;width:153px;height:50px;border-radius:6px;background:#1b78fe"></div>
<div class="a nw" style="left:2257px;top:761px;font-size:22px;line-height:24px;color:#fff;-webkit-text-stroke:0.3px #fff">签约</div>
<div class="a" style="left:2333px;top:755px;width:1px;height:33px;background:rgba(255,255,255,.7)"></div>
<svg class="a" style="left:2346px;top:767px" width="18" height="12" viewBox="0 0 18 12"><path d="M2 2L9 9 16 2" fill="none" stroke="#fff" stroke-width="1.8"/></svg>
<div class="a" style="left:370px;top:942px;width:2076px;height:1px;background:#ebeef5"></div>
<div class="a" style="left:386px;top:874px;width:22px;height:22px;border-radius:3px;background:#1b78fe"></div><svg class="a" style="left:386px;top:874px" width="22" height="22" viewBox="0 0 22 22"><path d="M5.5 11l4 4 7-7.5" fill="none" stroke="#fff" stroke-width="1.5"/></svg>
<div class="a nw ts" style="left:441px;top:873px;font-size:22px;line-height:24px;color:#555;">DQ189938092782…</div>
<div class="a nw ts" style="left:677px;top:855px;font-size:22px;line-height:24px;color:#555;">111</div>
<div class="a nw ts" style="left:677px;top:891px;font-size:19px;line-height:24px;color:#a3a3a3;">发起方<span style='margin-right:13px'>:</span>点签服务试用</div>
<div class="a" style="left:864px;top:888px;width:12px;height:12px;background:rgb(239,239,241)"></div><div class="a" style="left:876px;top:888px;width:12px;height:12px;background:rgb(228,228,230)"></div><div class="a" style="left:888px;top:888px;width:12px;height:12px;background:rgb(229,229,231)"></div><div class="a" style="left:900px;top:888px;width:12px;height:12px;background:rgb(236,236,238)"></div><div class="a" style="left:912px;top:888px;width:12px;height:12px;background:rgb(233,233,235)"></div><div class="a" style="left:924px;top:888px;width:12px;height:12px;background:rgb(235,235,237)"></div><div class="a" style="left:864px;top:900px;width:12px;height:12px;background:rgb(226,226,228)"></div><div class="a" style="left:876px;top:900px;width:12px;height:12px;background:rgb(227,227,229)"></div><div class="a" style="left:888px;top:900px;width:12px;height:12px;background:rgb(222,222,224)"></div><div class="a" style="left:900px;top:900px;width:12px;height:12px;background:rgb(228,228,230)"></div><div class="a" style="left:912px;top:900px;width:12px;height:12px;background:rgb(220,220,222)"></div><div class="a" style="left:924px;top:900px;width:12px;height:12px;background:rgb(221,221,223)"></div>
<div class="a nw ts" style="left:1071px;top:873px;font-size:22px;line-height:24px;color:#555;">点签服务试用</div>
<div class="a" style="left:1211px;top:871px;width:75px;height:29px;border:1px solid #ffe9a8;border-radius:5px;background:#fffbe8"></div><div class="a nw" style="left:1220px;top:874px;font-size:19px;line-height:22px;color:#f5a623">签约中</div>
<div class="a nw ts" style="left:1465px;top:873px;font-size:22px;line-height:24px;color:#555;">合同文件发起</div>
<div class="a" style="left:1638px;top:853px;width:55px;height:29px;border:1px solid #dcdfe6;border-radius:5px;background:#fff"></div><div class="a nw" style="left:1647px;top:856px;font-size:19px;line-height:22px;color:#555">发起</div>
<div class="a nw ts" style="left:1701px;top:854px;font-size:22px;line-height:24px;color:#555;">2025-03-11 16:44</div>
<div class="a" style="left:1638px;top:890px;width:55px;height:29px;border:1px solid #dcdfe6;border-radius:5px;background:#fff"></div><div class="a nw" style="left:1647px;top:893px;font-size:19px;line-height:22px;color:#555">截止</div>
<div class="a nw ts" style="left:1701px;top:891px;font-size:22px;line-height:24px;color:#555;">不限</div>
<div class="a" style="left:1918px;top:880px;width:10px;height:10px;border-radius:50%;background:#faa61a"></div>
<div class="a nw ts" style="left:1937px;top:873px;font-size:22px;line-height:24px;color:#555;">待我签约</div>
<div class="a" style="left:2095px;top:887px;width:22px;height:1.5px;background:#555"></div>
<div class="a" style="left:2225px;top:861px;width:153px;height:50px;border-radius:6px;background:#1b78fe"></div>
<div class="a nw" style="left:2257px;top:875px;font-size:22px;line-height:24px;color:#fff;-webkit-text-stroke:0.3px #fff">签约</div>
<div class="a" style="left:2333px;top:869px;width:1px;height:33px;background:rgba(255,255,255,.7)"></div>
<svg class="a" style="left:2346px;top:881px" width="18" height="12" viewBox="0 0 18 12"><path d="M2 2L9 9 16 2" fill="none" stroke="#fff" stroke-width="1.8"/></svg>
<div class="a" style="left:370px;top:1056px;width:2076px;height:1px;background:#ebeef5"></div>
<div class="a" style="left:386px;top:988px;width:22px;height:22px;border-radius:3px;background:#1b78fe"></div><svg class="a" style="left:386px;top:988px" width="22" height="22" viewBox="0 0 22 22"><path d="M5.5 11l4 4 7-7.5" fill="none" stroke="#fff" stroke-width="1.5"/></svg>
<div class="a nw ts" style="left:441px;top:987px;font-size:22px;line-height:24px;color:#555;">DQ189790616280…</div>
<div class="a nw ts" style="left:677px;top:969px;font-size:22px;line-height:24px;color:#555;">劳动合同书</div>
<div class="a nw ts" style="left:677px;top:1005px;font-size:19px;line-height:24px;color:#a3a3a3;">发起方<span style='margin-right:13px'>:</span>点签服务试用(</div>
<div class="a" style="left:873px;top:996px;width:12px;height:11px;background:rgb(242,242,244)"></div><div class="a" style="left:885px;top:996px;width:12px;height:11px;background:rgb(240,240,242)"></div><div class="a" style="left:897px;top:996px;width:12px;height:11px;background:rgb(247,247,249)"></div><div class="a" style="left:909px;top:996px;width:12px;height:11px;background:rgb(241,241,243)"></div><div class="a" style="left:921px;top:996px;width:12px;height:11px;background:rgb(243,243,245)"></div><div class="a" style="left:873px;top:1007px;width:12px;height:11px;background:rgb(205,205,207)"></div><div class="a" style="left:885px;top:1007px;width:12px;height:11px;background:rgb(211,211,213)"></div><div class="a" style="left:897px;top:1007px;width:12px;height:11px;background:rgb(223,223,225)"></div><div class="a" style="left:909px;top:1007px;width:12px;height:11px;background:rgb(224,224,226)"></div><div class="a" style="left:921px;top:1007px;width:12px;height:11px;background:rgb(219,219,221)"></div><div class="a" style="left:873px;top:1017px;width:12px;height:11px;background:rgb(243,243,245)"></div><div class="a" style="left:885px;top:1017px;width:12px;height:11px;background:rgb(244,244,246)"></div><div class="a" style="left:897px;top:1017px;width:12px;height:11px;background:rgb(240,240,242)"></div><div class="a" style="left:909px;top:1017px;width:12px;height:11px;background:rgb(242,242,244)"></div><div class="a" style="left:921px;top:1017px;width:12px;height:11px;background:rgb(244,244,246)"></div>
<div class="a nw ts" style="left:1071px;top:968px;font-size:22px;line-height:24px;color:#555;">点签服务试用</div>
<div class="a" style="left:1211px;top:966px;width:75px;height:29px;border:1px solid #ffe9a8;border-radius:5px;background:#fffbe8"></div><div class="a nw" style="left:1220px;top:969px;font-size:19px;line-height:22px;color:#f5a623">签约中</div>
<div class="a nw ts" style="left:1117px;top:1005px;font-size:22px;line-height:24px;color:#555;">迪</div>
<div class="a" style="left:1068px;top:1005px;width:12px;height:12px;background:rgb(220,220,222)"></div><div class="a" style="left:1080px;top:1005px;width:12px;height:12px;background:rgb(203,203,205)"></div><div class="a" style="left:1092px;top:1005px;width:12px;height:12px;background:rgb(218,218,220)"></div><div class="a" style="left:1104px;top:1005px;width:12px;height:12px;background:rgb(204,204,206)"></div><div class="a" style="left:1116px;top:1005px;width:12px;height:12px;background:rgb(210,210,212)"></div><div class="a" style="left:1068px;top:1017px;width:12px;height:12px;background:rgb(195,195,197)"></div><div class="a" style="left:1080px;top:1017px;width:12px;height:12px;background:rgb(190,190,192)"></div><div class="a" style="left:1092px;top:1017px;width:12px;height:12px;background:rgb(189,189,191)"></div><div class="a" style="left:1104px;top:1017px;width:12px;height:12px;background:rgb(192,192,194)"></div><div class="a" style="left:1116px;top:1017px;width:12px;height:12px;background:rgb(202,202,204)"></div>
<div class="a" style="left:1144px;top:1003px;width:75px;height:29px;border:1px solid #d9d9d9;border-radius:5px;background:#fff"></div><div class="a nw" style="left:1153px;top:1006px;font-size:19px;line-height:22px;color:#222">未签约</div>
<div class="a nw ts" style="left:1465px;top:987px;font-size:22px;line-height:24px;color:#555;">合同模板发起</div>
<div class="a" style="left:1638px;top:967px;width:55px;height:29px;border:1px solid #dcdfe6;border-radius:5px;background:#fff"></div><div class="a nw" style="left:1647px;top:970px;font-size:19px;line-height:22px;color:#555">发起</div>
<div class="a nw ts" style="left:1701px;top:968px;font-size:22px;line-height:24px;color:#555;">2025-03-07 15:04</div>
<div class="a" style="left:1638px;top:1004px;width:55px;height:29px;border:1px solid #dcdfe6;border-radius:5px;background:#fff"></div><div class="a nw" style="left:1647px;top:1007px;font-size:19px;line-height:22px;color:#555">截止</div>
<div class="a nw ts" style="left:1701px;top:1005px;font-size:22px;line-height:24px;color:#555;">不限</div>
<div class="a" style="left:1918px;top:994px;width:10px;height:10px;border-radius:50%;background:#faa61a"></div>
<div class="a nw ts" style="left:1937px;top:987px;font-size:22px;line-height:24px;color:#555;">待我签约</div>
<div class="a" style="left:2095px;top:1001px;width:22px;height:1.5px;background:#555"></div>
<div class="a" style="left:2225px;top:975px;width:153px;height:50px;border-radius:6px;background:#1b78fe"></div>
<div class="a nw" style="left:2257px;top:989px;font-size:22px;line-height:24px;color:#fff;-webkit-text-stroke:0.3px #fff">签约</div>
<div class="a" style="left:2333px;top:983px;width:1px;height:33px;background:rgba(255,255,255,.7)"></div>
<svg class="a" style="left:2346px;top:995px" width="18" height="12" viewBox="0 0 18 12"><path d="M2 2L9 9 16 2" fill="none" stroke="#fff" stroke-width="1.8"/></svg>
<div class="a" style="left:370px;top:1170px;width:2076px;height:1px;background:#ebeef5"></div>
<div class="a" style="left:386px;top:1102px;width:22px;height:22px;border-radius:3px;background:#1b78fe"></div><svg class="a" style="left:386px;top:1102px" width="22" height="22" viewBox="0 0 22 22"><path d="M5.5 11l4 4 7-7.5" fill="none" stroke="#fff" stroke-width="1.5"/></svg>
<div class="a nw ts" style="left:441px;top:1101px;font-size:22px;line-height:24px;color:#555;">DQ189753086935…</div>
<div class="a nw ts" style="left:677px;top:1083px;font-size:22px;line-height:24px;color:#555;">914.png</div>
<div class="a nw ts" style="left:677px;top:1119px;font-size:19px;line-height:24px;color:#a3a3a3;">发起方<span style='margin-right:13px'>:</span>点签服务试用(</div>
<div class="a" style="left:875px;top:1116px;width:12px;height:12px;background:rgb(221,221,223)"></div><div class="a" style="left:887px;top:1116px;width:12px;height:12px;background:rgb(221,221,223)"></div><div class="a" style="left:899px;top:1116px;width:12px;height:12px;background:rgb(227,227,229)"></div><div class="a" style="left:911px;top:1116px;width:12px;height:12px;background:rgb(237,237,239)"></div><div class="a" style="left:923px;top:1116px;width:12px;height:12px;background:rgb(230,230,232)"></div><div class="a" style="left:875px;top:1128px;width:12px;height:12px;background:rgb(219,219,221)"></div><div class="a" style="left:887px;top:1128px;width:12px;height:12px;background:rgb(227,227,229)"></div><div class="a" style="left:899px;top:1128px;width:12px;height:12px;background:rgb(221,221,223)"></div><div class="a" style="left:911px;top:1128px;width:12px;height:12px;background:rgb(219,219,221)"></div><div class="a" style="left:923px;top:1128px;width:12px;height:12px;background:rgb(222,222,224)"></div>
<div class="a nw ts" style="left:1071px;top:1101px;font-size:22px;line-height:24px;color:#555;">点签服务试用</div>
<div class="a" style="left:1211px;top:1099px;width:75px;height:29px;border:1px solid #ffe9a8;border-radius:5px;background:#fffbe8"></div><div class="a nw" style="left:1220px;top:1102px;font-size:19px;line-height:22px;color:#f5a623">签约中</div>
<div class="a nw ts" style="left:1465px;top:1101px;font-size:22px;line-height:24px;color:#555;">合同文件发起</div>
<div class="a" style="left:1638px;top:1081px;width:55px;height:29px;border:1px solid #dcdfe6;border-radius:5px;background:#fff"></div><div class="a nw" style="left:1647px;top:1084px;font-size:19px;line-height:22px;color:#555">发起</div>
<div class="a nw ts" style="left:1701px;top:1082px;font-size:22px;line-height:24px;color:#555;">2025-03-06 14:13</div>
<div class="a" style="left:1638px;top:1118px;width:55px;height:29px;border:1px solid #dcdfe6;border-radius:5px;background:#fff"></div><div class="a nw" style="left:1647px;top:1121px;font-size:19px;line-height:22px;color:#555">截止</div>
<div class="a nw ts" style="left:1701px;top:1119px;font-size:22px;line-height:24px;color:#555;">不限</div>
<div class="a" style="left:1918px;top:1108px;width:10px;height:10px;border-radius:50%;background:#faa61a"></div>
<div class="a nw ts" style="left:1937px;top:1101px;font-size:22px;line-height:24px;color:#555;">待我签约</div>
<div class="a" style="left:2095px;top:1115px;width:22px;height:1.5px;background:#555"></div>
<div class="a" style="left:2225px;top:1089px;width:153px;height:50px;border-radius:6px;background:#1b78fe"></div>
<div class="a nw" style="left:2257px;top:1103px;font-size:22px;line-height:24px;color:#fff;-webkit-text-stroke:0.3px #fff">签约</div>
<div class="a" style="left:2333px;top:1097px;width:1px;height:33px;background:rgba(255,255,255,.7)"></div>
<svg class="a" style="left:2346px;top:1109px" width="18" height="12" viewBox="0 0 18 12"><path d="M2 2L9 9 16 2" fill="none" stroke="#fff" stroke-width="1.8"/></svg>
<div class="a" style="left:370px;top:1284px;width:2076px;height:1px;background:#ebeef5"></div>
<div class="a" style="left:386px;top:1216px;width:22px;height:22px;border-radius:3px;background:#1b78fe"></div><svg class="a" style="left:386px;top:1216px" width="22" height="22" viewBox="0 0 22 22"><path d="M5.5 11l4 4 7-7.5" fill="none" stroke="#fff" stroke-width="1.5"/></svg>
<div class="a nw ts" style="left:441px;top:1197px;font-size:22px;line-height:24px;color:#555;">DQ188995590427…</div>
<div class="a nw ts" style="left:441px;top:1232px;font-size:22px;line-height:24px;color:#555;">DQ188995590427…</div>
<div class="a nw ts" style="left:677px;top:1197px;font-size:22px;line-height:24px;color:#555;">办公用品采购协议（范本）.docx</div>
<div class="a" style="left:864px;top:1200px;width:12px;height:12px;background:rgb(197,197,199)"></div><div class="a" style="left:876px;top:1200px;width:12px;height:12px;background:rgb(226,226,228)"></div><div class="a" style="left:888px;top:1200px;width:12px;height:12px;background:rgb(185,185,187)"></div><div class="a" style="left:900px;top:1200px;width:12px;height:12px;background:rgb(228,228,230)"></div><div class="a" style="left:912px;top:1200px;width:12px;height:12px;background:rgb(194,194,196)"></div><div class="a" style="left:924px;top:1200px;width:8px;height:12px;background:rgb(215,215,217)"></div><div class="a" style="left:864px;top:1212px;width:12px;height:12px;background:rgb(222,222,224)"></div><div class="a" style="left:876px;top:1212px;width:12px;height:12px;background:rgb(223,223,225)"></div><div class="a" style="left:888px;top:1212px;width:12px;height:12px;background:rgb(218,218,220)"></div><div class="a" style="left:900px;top:1212px;width:12px;height:12px;background:rgb(224,224,226)"></div><div class="a" style="left:912px;top:1212px;width:12px;height:12px;background:rgb(226,226,228)"></div><div class="a" style="left:924px;top:1212px;width:8px;height:12px;background:rgb(230,230,232)"></div>
<div class="a nw ts" style="left:677px;top:1233px;font-size:19px;line-height:24px;color:#a3a3a3;">发起方<span style='margin-right:13px'>:</span>点签服务试用</div>
<div class="a" style="left:864px;top:1236px;width:12px;height:12px;background:rgb(229,229,231)"></div><div class="a" style="left:876px;top:1236px;width:12px;height:12px;background:rgb(218,218,220)"></div><div class="a" style="left:888px;top:1236px;width:12px;height:12px;background:rgb(222,222,224)"></div><div class="a" style="left:900px;top:1236px;width:12px;height:12px;background:rgb(219,219,221)"></div><div class="a" style="left:912px;top:1236px;width:12px;height:12px;background:rgb(217,217,219)"></div><div class="a" style="left:924px;top:1236px;width:8px;height:12px;background:rgb(226,226,228)"></div><div class="a" style="left:864px;top:1248px;width:12px;height:12px;background:rgb(237,237,239)"></div><div class="a" style="left:876px;top:1248px;width:12px;height:12px;background:rgb(238,238,240)"></div><div class="a" style="left:888px;top:1248px;width:12px;height:12px;background:rgb(244,244,246)"></div><div class="a" style="left:900px;top:1248px;width:12px;height:12px;background:rgb(238,238,240)"></div><div class="a" style="left:912px;top:1248px;width:12px;height:12px;background:rgb(236,236,238)"></div><div class="a" style="left:924px;top:1248px;width:8px;height:12px;background:rgb(239,239,241)"></div>
<div class="a nw ts" style="left:1071px;top:1196px;font-size:22px;line-height:24px;color:#555;">点签服务试用</div>
<div class="a" style="left:1211px;top:1194px;width:75px;height:29px;border:1px solid #ffe9a8;border-radius:5px;background:#fffbe8"></div><div class="a nw" style="left:1220px;top:1197px;font-size:19px;line-height:22px;color:#f5a623">签约中</div>
<div class="a" style="left:1068px;top:1233px;width:12px;height:12px;background:rgb(211,211,213)"></div><div class="a" style="left:1080px;top:1233px;width:12px;height:12px;background:rgb(211,211,213)"></div><div class="a" style="left:1092px;top:1233px;width:12px;height:12px;background:rgb(200,200,202)"></div><div class="a" style="left:1104px;top:1233px;width:12px;height:12px;background:rgb(206,206,208)"></div><div class="a" style="left:1116px;top:1233px;width:12px;height:12px;background:rgb(207,207,209)"></div><div class="a" style="left:1068px;top:1245px;width:12px;height:12px;background:rgb(206,206,208)"></div><div class="a" style="left:1080px;top:1245px;width:12px;height:12px;background:rgb(190,190,192)"></div><div class="a" style="left:1092px;top:1245px;width:12px;height:12px;background:rgb(205,205,207)"></div><div class="a" style="left:1104px;top:1245px;width:12px;height:12px;background:rgb(209,209,211)"></div><div class="a" style="left:1116px;top:1245px;width:12px;height:12px;background:rgb(185,185,187)"></div>
<div class="a" style="left:1144px;top:1231px;width:75px;height:29px;border:1px solid #c8eeb0;border-radius:5px;background:#f0fbe9"></div><div class="a nw" style="left:1153px;top:1234px;font-size:19px;line-height:22px;color:#52c41a">已签约</div>
<div class="a nw ts" style="left:932px;top:1233px;font-size:19px;line-height:24px;color:#a3a3a3;">)</div>
<div class="a nw ts" style="left:1465px;top:1215px;font-size:22px;line-height:24px;color:#555;">合同文件发起</div>
<div class="a" style="left:1638px;top:1195px;width:55px;height:29px;border:1px solid #dcdfe6;border-radius:5px;background:#fff"></div><div class="a nw" style="left:1647px;top:1198px;font-size:19px;line-height:22px;color:#555">发起</div>
<div class="a nw ts" style="left:1701px;top:1196px;font-size:22px;line-height:24px;color:#555;">2025-02-13 16:32</div>
<div class="a" style="left:1638px;top:1232px;width:55px;height:29px;border:1px solid #dcdfe6;border-radius:5px;background:#fff"></div><div class="a nw" style="left:1647px;top:1235px;font-size:19px;line-height:22px;color:#555">截止</div>
<div class="a nw ts" style="left:1701px;top:1233px;font-size:22px;line-height:24px;color:#555;">不限</div>
<div class="a" style="left:1918px;top:1222px;width:10px;height:10px;border-radius:50%;background:#faa61a"></div>
<div class="a nw ts" style="left:1937px;top:1215px;font-size:22px;line-height:24px;color:#555;">待我签约</div>
<div class="a" style="left:2095px;top:1229px;width:22px;height:1.5px;background:#555"></div>
<div class="a" style="left:2225px;top:1203px;width:153px;height:50px;border-radius:6px;background:#1b78fe"></div>
<div class="a nw" style="left:2257px;top:1217px;font-size:22px;line-height:24px;color:#fff;-webkit-text-stroke:0.3px #fff">签约</div>
<div class="a" style="left:2333px;top:1211px;width:1px;height:33px;background:rgba(255,255,255,.7)"></div>
<svg class="a" style="left:2346px;top:1223px" width="18" height="12" viewBox="0 0 18 12"><path d="M2 2L9 9 16 2" fill="none" stroke="#fff" stroke-width="1.8"/></svg>
<div class="a" style="left:370px;top:1398px;width:2076px;height:1px;background:#ebeef5"></div>
<div class="a" style="left:386px;top:1330px;width:22px;height:22px;border-radius:3px;background:#1b78fe"></div><svg class="a" style="left:386px;top:1330px" width="22" height="22" viewBox="0 0 22 22"><path d="M5.5 11l4 4 7-7.5" fill="none" stroke="#fff" stroke-width="1.5"/></svg>
<div class="a nw ts" style="left:441px;top:1329px;font-size:22px;line-height:24px;color:#555;">DQ188744697017…</div>
<div class="a nw ts" style="left:677px;top:1311px;font-size:22px;line-height:24px;color:#555;">办公用品采购协议（范本）.docx</div>
<div class="a" style="left:736px;top:1319px;width:12px;height:12px;background:rgb(199,199,201)"></div><div class="a" style="left:748px;top:1319px;width:12px;height:12px;background:rgb(199,199,201)"></div><div class="a" style="left:760px;top:1319px;width:12px;height:12px;background:rgb(196,196,198)"></div><div class="a" style="left:772px;top:1319px;width:12px;height:12px;background:rgb(182,182,184)"></div><div class="a" style="left:784px;top:1319px;width:12px;height:12px;background:rgb(185,185,187)"></div><div class="a" style="left:796px;top:1319px;width:12px;height:12px;background:rgb(187,187,189)"></div><div class="a" style="left:808px;top:1319px;width:12px;height:12px;background:rgb(190,190,192)"></div><div class="a" style="left:820px;top:1319px;width:12px;height:12px;background:rgb(199,199,201)"></div><div class="a" style="left:832px;top:1319px;width:8px;height:12px;background:rgb(194,194,196)"></div>
<div class="a nw ts" style="left:677px;top:1347px;font-size:19px;line-height:24px;color:#a3a3a3;">发起方<span style='margin-right:13px'>:</span></div>
<div class="a" style="left:746px;top:1331px;width:12px;height:12px;background:rgb(242,242,244)"></div><div class="a" style="left:758px;top:1331px;width:12px;height:12px;background:rgb(245,245,247)"></div><div class="a" style="left:770px;top:1331px;width:12px;height:12px;background:rgb(246,246,248)"></div><div class="a" style="left:782px;top:1331px;width:12px;height:12px;background:rgb(244,244,246)"></div><div class="a" style="left:794px;top:1331px;width:12px;height:12px;background:rgb(238,238,240)"></div><div class="a" style="left:806px;top:1331px;width:10px;height:12px;background:rgb(243,243,245)"></div><div class="a" style="left:746px;top:1343px;width:12px;height:12px;background:rgb(232,232,234)"></div><div class="a" style="left:758px;top:1343px;width:12px;height:12px;background:rgb(232,232,234)"></div><div class="a" style="left:770px;top:1343px;width:12px;height:12px;background:rgb(230,230,232)"></div><div class="a" style="left:782px;top:1343px;width:12px;height:12px;background:rgb(223,223,225)"></div><div class="a" style="left:794px;top:1343px;width:12px;height:12px;background:rgb(222,222,224)"></div><div class="a" style="left:806px;top:1343px;width:10px;height:12px;background:rgb(219,219,221)"></div><div class="a" style="left:746px;top:1355px;width:12px;height:12px;background:rgb(227,227,229)"></div><div class="a" style="left:758px;top:1355px;width:12px;height:12px;background:rgb(235,235,237)"></div><div class="a" style="left:770px;top:1355px;width:12px;height:12px;background:rgb(227,227,229)"></div><div class="a" style="left:782px;top:1355px;width:12px;height:12px;background:rgb(226,226,228)"></div><div class="a" style="left:794px;top:1355px;width:12px;height:12px;background:rgb(227,227,229)"></div><div class="a" style="left:806px;top:1355px;width:10px;height:12px;background:rgb(226,226,228)"></div>
<div class="a nw ts" style="left:1117px;top:1310px;font-size:22px;line-height:24px;color:#555;">燕</div>
<div class="a" style="left:1068px;top:1310px;width:12px;height:12px;background:rgb(202,202,204)"></div><div class="a" style="left:1080px;top:1310px;width:12px;height:12px;background:rgb(218,218,220)"></div><div class="a" style="left:1092px;top:1310px;width:12px;height:12px;background:rgb(218,218,220)"></div><div class="a" style="left:1104px;top:1310px;width:12px;height:12px;background:rgb(206,206,208)"></div><div class="a" style="left:1116px;top:1310px;width:12px;height:12px;background:rgb(217,217,219)"></div><div class="a" style="left:1068px;top:1322px;width:12px;height:12px;background:rgb(188,188,190)"></div><div class="a" style="left:1080px;top:1322px;width:12px;height:12px;background:rgb(195,195,197)"></div><div class="a" style="left:1092px;top:1322px;width:12px;height:12px;background:rgb(189,189,191)"></div><div class="a" style="left:1104px;top:1322px;width:12px;height:12px;background:rgb(200,200,202)"></div><div class="a" style="left:1116px;top:1322px;width:12px;height:12px;background:rgb(199,199,201)"></div>
<div class="a" style="left:1144px;top:1308px;width:75px;height:29px;border:1px solid #c8eeb0;border-radius:5px;background:#f0fbe9"></div><div class="a nw" style="left:1153px;top:1311px;font-size:19px;line-height:22px;color:#52c41a">已签约</div>
<div class="a nw ts" style="left:1071px;top:1347px;font-size:22px;line-height:24px;color:#555;">点签服务试用</div>
<div class="a" style="left:1211px;top:1345px;width:75px;height:29px;border:1px solid #ffe9a8;border-radius:5px;background:#fffbe8"></div><div class="a nw" style="left:1220px;top:1348px;font-size:19px;line-height:22px;color:#f5a623">签约中</div>
<div class="a nw ts" style="left:1465px;top:1329px;font-size:22px;line-height:24px;color:#555;">合同文件发起</div>
<div class="a" style="left:1638px;top:1309px;width:55px;height:29px;border:1px solid #dcdfe6;border-radius:5px;background:#fff"></div><div class="a nw" style="left:1647px;top:1312px;font-size:19px;line-height:22px;color:#555">发起</div>
<div class="a nw ts" style="left:1701px;top:1310px;font-size:22px;line-height:24px;color:#555;">2025-02-06 18:23</div>
<div class="a" style="left:1638px;top:1346px;width:55px;height:29px;border:1px solid #dcdfe6;border-radius:5px;background:#fff"></div><div class="a nw" style="left:1647px;top:1349px;font-size:19px;line-height:22px;color:#555">截止</div>
<div class="a nw ts" style="left:1701px;top:1347px;font-size:22px;line-height:24px;color:#555;">不限</div>
<div class="a" style="left:1918px;top:1336px;width:10px;height:10px;border-radius:50%;background:#faa61a"></div>
<div class="a nw ts" style="left:1937px;top:1329px;font-size:22px;line-height:24px;color:#555;">待我签约</div>
<div class="a" style="left:2095px;top:1343px;width:22px;height:1.5px;background:#555"></div>
<div class="a" style="left:2225px;top:1317px;width:153px;height:50px;border-radius:6px;background:#1b78fe"></div>
<div class="a nw" style="left:2257px;top:1331px;font-size:22px;line-height:24px;color:#fff;-webkit-text-stroke:0.3px #fff">签约</div>
<div class="a" style="left:2333px;top:1325px;width:1px;height:33px;background:rgba(255,255,255,.7)"></div>
<svg class="a" style="left:2346px;top:1337px" width="18" height="12" viewBox="0 0 18 12"><path d="M2 2L9 9 16 2" fill="none" stroke="#fff" stroke-width="1.8"/></svg>
<!-- /CARD -->
<!-- ANNOT -->
<svg class="a" style="left:0;top:0" width="2508" height="1402" viewBox="0 0 2508 1402">
<rect x="6.5" y="200.5" width="256.0" height="84.0" rx="4" fill="none" stroke="#e8391f" stroke-width="3"/>
<rect x="371.5" y="228.5" width="552.0" height="74.0" rx="4" fill="none" stroke="#e8391f" stroke-width="3"/>
<rect x="355.5" y="419.5" width="70.0" height="953.0" rx="4" fill="none" stroke="#e8391f" stroke-width="3"/>
<rect x="2113.5" y="310.5" width="158.0" height="79.0" rx="4" fill="none" stroke="#e8391f" stroke-width="3"/>
<path d="M286.0 245.5L704.1 263.2" stroke="#e8391f" stroke-width="3.2" stroke-linecap="round"/><path d="M716.0 263.7L698.6 272.0L704.1 263.2L699.4 254.0Z" fill="#e8391f"/>
<path d="M768.3 335.6L462.8 467.2" stroke="#e8391f" stroke-width="3.2" stroke-linecap="round"/><path d="M451.9 471.9L464.0 456.9L462.8 467.2L471.1 473.4Z" fill="#e8391f"/>
<path d="M510.6 502.5L2052.3 385.9" stroke="#e8391f" stroke-width="3.6" stroke-linecap="round"/><path d="M2064.9 384.9L2047.6 395.2L2052.3 385.9L2046.3 377.3Z" fill="#e8391f"/>
</svg>
<div class="a nw" style="left:190px;top:231px;font-size:21px;line-height:20px;color:#e8391f">1</div>
<div class="a nw" style="left:765px;top:250px;font-size:20px;line-height:20px;color:#e8391f">2</div>
<div class="a nw" style="left:442px;top:396px;font-size:20px;line-height:20px;color:#e8391f">3</div>
<div class="a nw" style="left:2028px;top:340px;font-size:21px;line-height:20px;color:#e8391f">4</div>
<!-- /ANNOT -->
<div id="winborder" class="a" style="left:0;top:0;width:2508px;height:1402px;border:1px solid rgba(0,0,0,0.06);border-radius:12px;pointer-events:none"></div>
</div>
</body></html>
